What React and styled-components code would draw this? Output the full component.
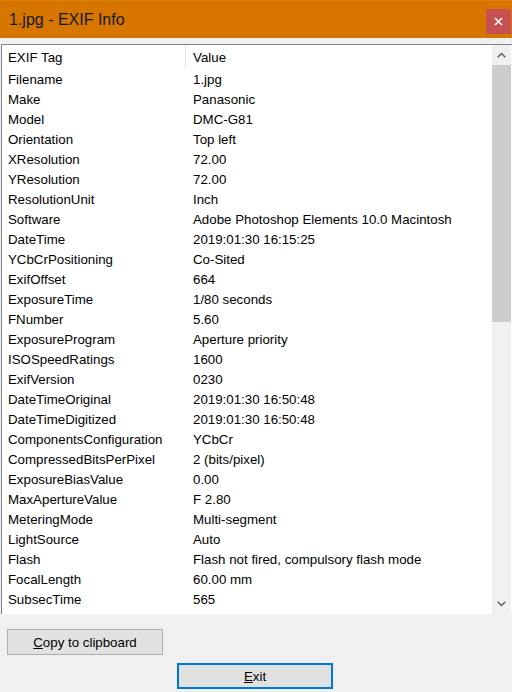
import styled, { createGlobalStyle } from "styled-components";

const GlobalStyle = createGlobalStyle`
	html, body {
		margin: 0;
		padding: 0;
		background: #f0f0f0;
	}
	body {
		font-family: "Liberation Sans", Arial, sans-serif;
	}
`;

const Window = styled.div`
	width: 512px;
	height: 692px;
	display: flex;
	flex-direction: column;
	background: #f0f0f0;
	overflow: hidden;
`;

const TitleBar = styled.div`
	height: 38px;
	flex: none;
	background: #d67600;
	border-top: 1px solid #dc7d0a;
	box-sizing: border-box;
	display: flex;
	align-items: center;
	justify-content: space-between;
	padding: 0 1px 0 9px;
	font-size: 16px;
	color: #161616;
`;

const CloseButton = styled.div`
	width: 25px;
	height: 25px;
	background: #c75050;
	display: flex;
	align-items: center;
	justify-content: center;
	margin-top: 4px;
`;

const Body = styled.div`
	flex: 1;
	display: flex;
	flex-direction: column;
	padding: 6px 0 0 1px;
`;

const ListBox = styled.div`
	height: 570px;
	background: #fff;
	border-top: 1px solid #828282;
	border-left: 1px solid #828282;
	box-sizing: border-box;
	display: flex;
	overflow: hidden;
`;

const Table = styled.div`
	flex: 1;
	font-size: 13.3px;
	color: #000;
`;

const Row = styled.div`
	display: grid;
	grid-template-columns: 184px 1fr;
	height: ${(p) => (p.$header ? "24px" : "20px")};
	align-items: center;
`;

const Cell = styled.div`
	padding-left: ${(p) => (p.$first ? "6px" : "7px")};
	height: 100%;
	display: flex;
	align-items: center;
	white-space: nowrap;
	border-right: ${(p) => (p.$divider ? "1px solid #e5e5e5" : "none")};
`;

const ScrollBar = styled.div`
	width: 19px;
	flex: none;
	background: #f0f0f0;
	display: flex;
	flex-direction: column;
	margin-right: 1px;
`;

const Arrow = styled.div`
	height: 20px;
	display: flex;
	align-items: center;
	justify-content: center;
	flex: none;
`;

const Thumb = styled.div`
	height: 257px;
	background: #cdcdcd;
	flex: none;
`;

const Track = styled.div`
	flex: 1;
`;

const Buttons = styled.div`
	display: flex;
	flex-direction: column;
	padding: 15px 0 0 6px;
	gap: 8px;
`;

const Button = styled.button`
	width: 156px;
	height: 26px;
	box-sizing: border-box;
	background: #e1e1e1;
	border: ${(p) => (p.$focused ? "2px solid #0078d7" : "1px solid #adadad")};
	margin-left: ${(p) => p.$indent || 0}px;
	font-family: "Liberation Sans", Arial, sans-serif;
	font-size: 13.3px;
	color: #000;
	padding: 0;
	u {
		text-decoration: underline;
	}
`;

const rows = [
	["Filename", "1.jpg"],
	["Make", "Panasonic"],
	["Model", "DMC-G81"],
	["Orientation", "Top left"],
	["XResolution", "72.00"],
	["YResolution", "72.00"],
	["ResolutionUnit", "Inch"],
	["Software", "Adobe Photoshop Elements 10.0 Macintosh"],
	["DateTime", "2019:01:30 16:15:25"],
	["YCbCrPositioning", "Co-Sited"],
	["ExifOffset", "664"],
	["ExposureTime", "1/80 seconds"],
	["FNumber", "5.60"],
	["ExposureProgram", "Aperture priority"],
	["ISOSpeedRatings", "1600"],
	["ExifVersion", "0230"],
	["DateTimeOriginal", "2019:01:30 16:50:48"],
	["DateTimeDigitized", "2019:01:30 16:50:48"],
	["ComponentsConfiguration", "YCbCr"],
	["CompressedBitsPerPixel", "2 (bits/pixel)"],
	["ExposureBiasValue", "0.00"],
	["MaxApertureValue", "F 2.80"],
	["MeteringMode", "Multi-segment"],
	["LightSource", "Auto"],
	["Flash", "Flash not fired, compulsory flash mode"],
	["FocalLength", "60.00 mm"],
	["SubsecTime", "565"],
];

const App = () => {
	return (
		<Window>
			<GlobalStyle />
			<TitleBar>
				<span>1.jpg - EXIF Info</span>
				<CloseButton>
					<svg width="9" height="9" viewBox="0 0 9 9">
						<path d="M1 1L8 8M8 1L1 8" stroke="#fff" strokeWidth="1.6" />
					</svg>
				</CloseButton>
			</TitleBar>
			<Body>
				<ListBox>
					<Table>
						<Row $header>
							<Cell $first $divider>EXIF Tag</Cell>
							<Cell>Value</Cell>
						</Row>
						{rows.map(([tag, value]) => (
							<Row key={tag}>
								<Cell $first>{tag}</Cell>
								<Cell>{value}</Cell>
							</Row>
						))}
					</Table>
					<ScrollBar>
						<Arrow>
							<svg width="9" height="6" viewBox="0 0 9 6">
								<path d="M0.7 5.3L4.5 1.5L8.3 5.3" stroke="#606060" strokeWidth="1.5" fill="none" />
							</svg>
						</Arrow>
						<Thumb />
						<Track />
						<Arrow>
							<svg width="9" height="6" viewBox="0 0 9 6">
								<path d="M0.7 0.7L4.5 4.5L8.3 0.7" stroke="#606060" strokeWidth="1.5" fill="none" />
							</svg>
						</Arrow>
					</ScrollBar>
				</ListBox>
				<Buttons>
					<Button>
						<u>C</u>opy to clipboard
					</Button>
					<Button $focused $indent={170}>
						<u>E</u>xit
					</Button>
				</Buttons>
			</Body>
		</Window>
	);
};

export default App;
